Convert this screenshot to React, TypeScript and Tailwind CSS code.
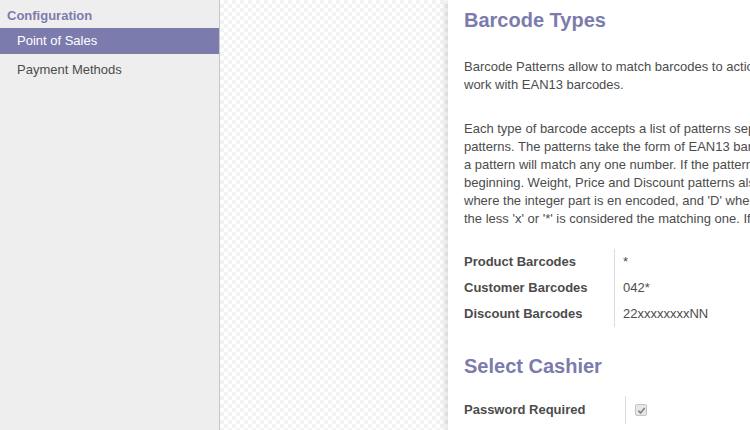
import React from "react";

const font = { fontFamily: '"Liberation Sans", Arial, sans-serif' };

function Row({ label, value }: { label: string; value: string }) {
  return (
    <div className="flex h-[26px] items-center">
      <div className="w-[150px] font-bold text-[13px] text-[#4c4c4c]">{label}</div>
      <div className="h-full border-l border-[#dcdcdc] pl-[8px] flex items-center text-[13px] text-[#4c4c4c]">{value}</div>
    </div>
  );
}

export default function App() {
  return (
    <div className="w-[750px] h-[430px] flex overflow-hidden bg-white" style={font}>
      <div className="w-[220px] shrink-0 bg-[#efeeef] border-r border-[#c8c8c8] flex flex-col">
        <div className="h-[28px] flex items-center pl-[7px] pt-[3px] text-[13px] font-bold text-[#7c7bad]">Configuration</div>
        <div className="h-[26px] flex items-center pl-[17px] text-[13px] text-white bg-[#7c7bad]">Point of Sales</div>
        <div className="h-[31px] flex items-center pl-[17px] text-[13px] text-[#4c4c4c]">Payment Methods</div>
      </div>
      <div className="flex-1 min-w-0 flex bg-[repeating-conic-gradient(#f3f3f3_0_25%,#ffffff_0_50%)] bg-[length:8px_8px]">
        <div className="w-[228px] shrink-0" />
        <div className="flex-1 min-w-0 bg-white shadow-[-3px_0_6px_rgba(0,0,0,0.12)] overflow-hidden pl-[16px]">
          <div className="whitespace-nowrap">
            <div className="text-[20px] font-bold text-[#7c7bad] pt-[8px] leading-[24px]">Barcode Types</div>
            <div className="mt-[26px] text-[13px] leading-[18px] text-[#4c4c4c]">
              <div>Barcode Patterns allow to match barcodes to actions or to embed information such as price and quantity. The default patterns</div>
              <div>work with EAN13 barcodes.</div>
            </div>
            <div className="mt-[26px] text-[13px] leading-[18px] text-[#4c4c4c]">
              <div>Each type of barcode accepts a list of patterns separated by commas. Product barcodes can have</div>
              <div>patterns. The patterns take the form of EAN13 barcodes where the last digit is not checked. 'x' in</div>
              <div>a pattern will match any one number. If the pattern ends with '*', any number of digits can follow the</div>
              <div>beginning. Weight, Price and Discount patterns also need to specify 'N' for the integer part</div>
              <div>where the integer part is en encoded, and 'D' where the decimal part is encoded. The pattern with</div>
              <div>the less 'x' or '*' is considered the matching one. If no pattern matches, the barcode is ignored.</div>
            </div>
            <div className="mt-[21px] flex flex-col">
              <Row label="Product Barcodes" value="*" />
              <Row label="Customer Barcodes" value="042*" />
              <Row label="Discount Barcodes" value="22xxxxxxxxNN" />
            </div>
            <div className="mt-[27px] text-[20px] font-bold text-[#7c7bad] leading-[24px]">Select Cashier</div>
            <div className="mt-[18px] flex h-[28px] items-center">
              <div className="w-[161px] font-bold text-[13px] text-[#4c4c4c]">Password Required</div>
              <div className="h-full border-l border-[#dcdcdc] pl-[9px] flex items-center">
                <div className="w-[12px] h-[12px] rounded-[2px] border border-[#c4c4c4] bg-[#e8e8e8] flex items-center justify-center">
                  <svg width="9" height="9" viewBox="0 0 10 10">
                    <path d="M1.5 5.2 L4 7.6 L8.6 2.2" fill="none" stroke="#8a8a8a" strokeWidth="2" />
                  </svg>
                </div>
              </div>
            </div>
          </div>
        </div>
      </div>
    </div>
  );
}
